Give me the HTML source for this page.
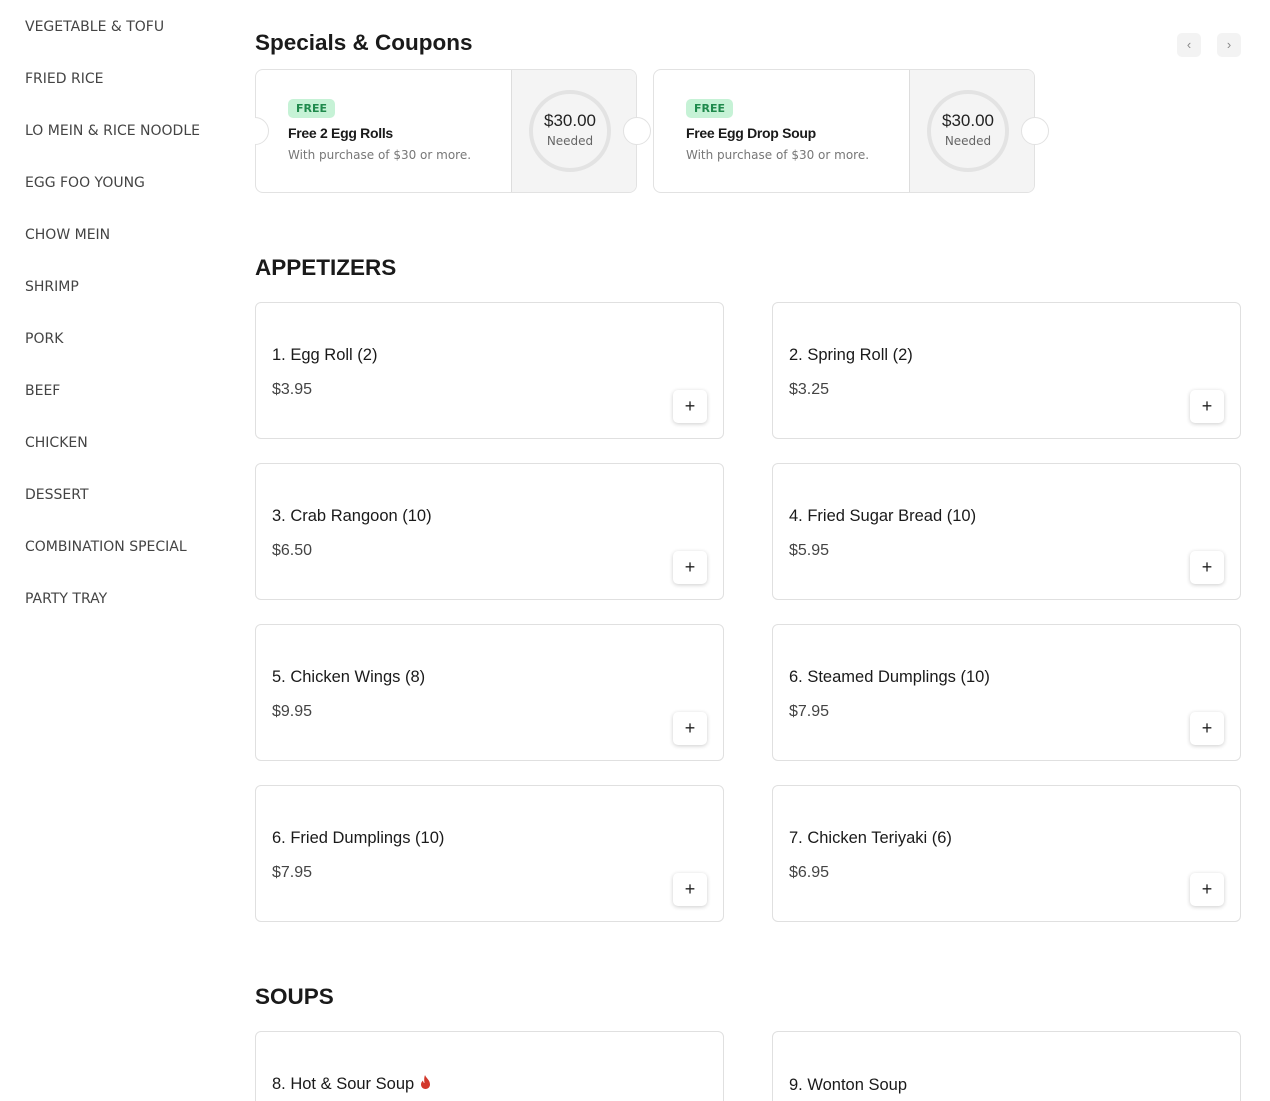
<!DOCTYPE html>
<html><head><meta charset="utf-8"><style>
*{box-sizing:border-box;margin:0;padding:0}
html,body{width:1270px;height:1101px;overflow:hidden}
body{background:#fff;font-family:"Liberation Sans",sans-serif;color:#1a1a1a;position:relative}
.side{position:absolute;left:25px;top:0}
.side div{position:absolute;left:0;white-space:nowrap;font-family:"DejaVu Sans",sans-serif;font-size:14px;color:#444;line-height:20px}
h2{position:absolute;left:255px;font-size:22.5px;font-weight:bold;color:#1a1a1a;line-height:30px}
.nav{position:absolute;top:33px;width:24px;height:24px;border-radius:5px;background:#f3f3f3;color:#888;font-size:13px;text-align:center;line-height:23px}
.cp{position:absolute;top:69px;width:382px;height:124px;border:1px solid #e2e2e2;border-radius:8px;overflow:hidden;background:#fff}
.cp .r{position:absolute;left:255px;top:0;width:127px;height:124px;background:#f4f4f4;border-left:1px solid #ddd}
.cp .circ{position:absolute;left:17px;top:20px;width:82px;height:82px;border-radius:50%;border:4px solid #e3e3e3;text-align:center}
.circ b{display:block;font-weight:normal;font-size:17px;margin-top:17px;color:#222}
.circ i{display:block;font-style:normal;font-size:12px;color:#666;margin-top:3px;font-family:"DejaVu Sans",sans-serif}
.notch{position:absolute;width:28px;height:28px;border-radius:50%;background:#fff;border:1px solid #e2e2e2;top:117px}
.tag{position:absolute;left:32px;top:29px;background:#c6f2d6;color:#1f8a4c;font-size:11px;font-weight:bold;padding:3px 8px;border-radius:5px;font-family:"DejaVu Sans",sans-serif}
.ct{position:absolute;left:32px;top:55px;font-size:14px;font-weight:bold;letter-spacing:-0.3px}
.cs{position:absolute;left:32px;top:78px;font-size:12px;color:#777;font-family:"DejaVu Sans",sans-serif}
.card{position:absolute;width:469px;height:137px;border:1px solid #e0e0e0;border-radius:6px;background:#fff}
.card .n{position:absolute;left:16px;top:43px;font-size:16.5px;color:#1a1a1a}
.card .p{position:absolute;left:16px;top:78px;font-size:16px;color:#444}
.card .b{position:absolute;left:417px;top:87px;width:34px;height:33px;border-radius:5px;background:#fff;box-shadow:0 1px 4px rgba(0,0,0,.2);text-align:center;line-height:32px;font-size:18px;color:#222}
</style></head><body>
<div class="side">
<div style="top:17px">VEGETABLE &amp; TOFU</div>
<div style="top:69px">FRIED RICE</div>
<div style="top:121px">LO MEIN &amp; RICE NOODLE</div>
<div style="top:173px">EGG FOO YOUNG</div>
<div style="top:225px">CHOW MEIN</div>
<div style="top:277px">SHRIMP</div>
<div style="top:329px">PORK</div>
<div style="top:381px">BEEF</div>
<div style="top:433px">CHICKEN</div>
<div style="top:485px">DESSERT</div>
<div style="top:537px">COMBINATION SPECIAL</div>
<div style="top:589px">PARTY TRAY</div>
</div>
<h2 style="top:28px">Specials &amp; Coupons</h2>
<div class="nav" style="left:1177px">‹</div>
<div class="nav" style="left:1217px">›</div>

<div class="cp" style="left:255px"><div class="tag">FREE</div><div class="ct">Free 2 Egg Rolls</div><div class="cs">With purchase of $30 or more.</div>
<div class="r"><div class="circ"><b>$30.00</b><i>Needed</i></div></div></div>
<div class="cp" style="left:653px"><div class="tag">FREE</div><div class="ct">Free Egg Drop Soup</div><div class="cs">With purchase of $30 or more.</div>
<div class="r"><div class="circ"><b>$30.00</b><i>Needed</i></div></div></div>
<div class="notch" style="left:241px"></div>
<div class="notch" style="left:623px"></div>
<div class="notch" style="left:1021px"></div>
<div style="position:absolute;left:230px;top:100px;width:25px;height:70px;background:#fff"></div>

<h2 style="top:253px">APPETIZERS</h2>
<div class="card" style="left:255px;top:302px"><div class="n">1. Egg Roll (2)</div><div class="p">$3.95</div><div class="b">+</div></div>
<div class="card" style="left:772px;top:302px"><div class="n">2. Spring Roll (2)</div><div class="p">$3.25</div><div class="b">+</div></div>
<div class="card" style="left:255px;top:463px"><div class="n">3. Crab Rangoon (10)</div><div class="p">$6.50</div><div class="b">+</div></div>
<div class="card" style="left:772px;top:463px"><div class="n">4. Fried Sugar Bread (10)</div><div class="p">$5.95</div><div class="b">+</div></div>
<div class="card" style="left:255px;top:624px"><div class="n">5. Chicken Wings (8)</div><div class="p">$9.95</div><div class="b">+</div></div>
<div class="card" style="left:772px;top:624px"><div class="n">6. Steamed Dumplings (10)</div><div class="p">$7.95</div><div class="b">+</div></div>
<div class="card" style="left:255px;top:785px"><div class="n">6. Fried Dumplings (10)</div><div class="p">$7.95</div><div class="b">+</div></div>
<div class="card" style="left:772px;top:785px"><div class="n">7. Chicken Teriyaki (6)</div><div class="p">$6.95</div><div class="b">+</div></div>

<h2 style="top:982px">SOUPS</h2>
<div class="card" style="left:255px;top:1031px;height:80px"><div class="n">8. Hot &amp; Sour Soup <svg width="13" height="14" viewBox="0 0 13 14" style="vertical-align:0"><path d="M6 0C7 3 11 5 11 9.5C11 12 9 14 6.5 14S2 12 2 9.5C2 7.5 3 6.5 4 5.5C4 7 5 8 5.5 8C5 5 5 2.5 6 0Z" fill="#d2382c"/></svg></div></div>
<div class="card" style="left:772px;top:1031px;height:80px"><div class="n" style="top:44px">9. Wonton Soup</div></div>
</body></html>
